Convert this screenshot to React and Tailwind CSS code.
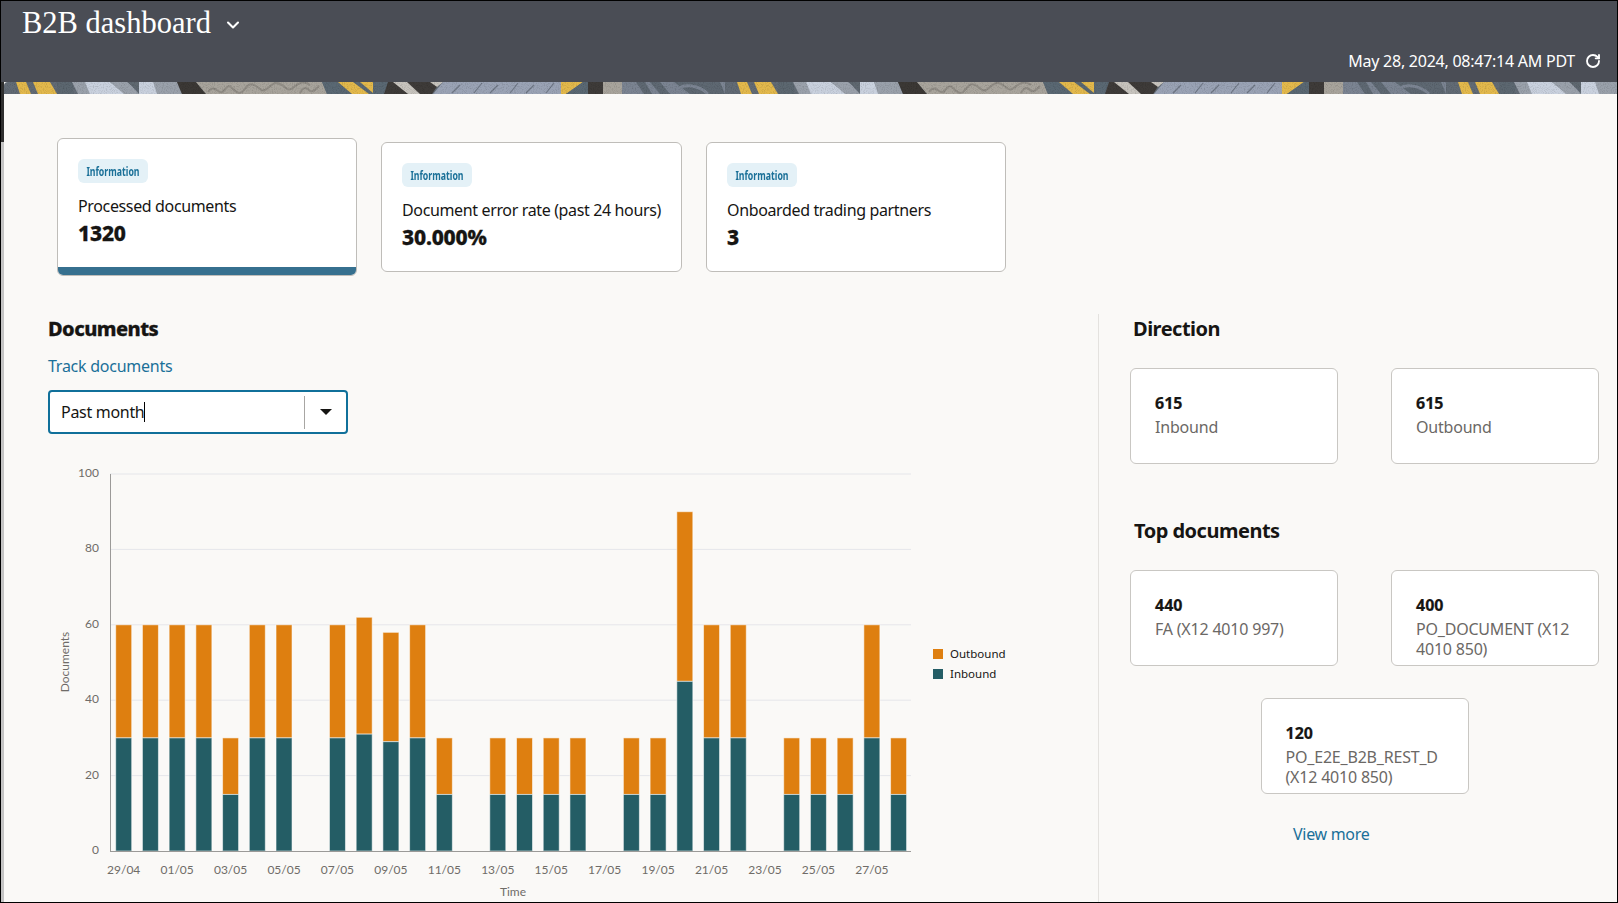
import React from "react";
import { ChevronDown, RotateCw } from "lucide-react";

const SANS = "font-['Noto_Sans',sans-serif]";

const days = [
  [30, 30], [30, 30], [30, 30], [30, 30], [15, 15], [30, 30], [30, 30], [0, 0],
  [30, 30], [31, 31], [29, 29], [30, 30], [15, 15], [0, 0], [15, 15], [15, 15],
  [15, 15], [15, 15], [0, 0], [15, 15], [15, 15], [45, 45], [30, 30], [30, 30],
  [0, 0], [15, 15], [15, 15], [15, 15], [30, 30], [15, 15],
];
const ticks = ["29/04", "01/05", "03/05", "05/05", "07/05", "09/05", "11/05", "13/05", "15/05", "17/05", "19/05", "21/05", "23/05", "25/05", "27/05"];
const yAt = (v) => 851 - v * 3.77;
const xAt = (i) => 123.7 + i * 26.72;

function BannerTile({ dx }) {
  return (
    <g transform={`translate(${dx} 0)`}>
      <rect x="4" y="0" width="721" height="12" fill="#626b75" />
      <polygon points="16,0 26,0 31,12 20,12" fill="#e3b94c" />
      <polygon points="33,0 50,0 57,12 38,12" fill="#e3b94c" />
      <rect x="57" y="0" width="16" height="12" fill="#5c6770" />
      <polygon points="72,0 88,0 92,12 78,12" fill="#9aa1ab" />
      <polygon points="85,0 110,0 126,12 90,12" fill="#c9d1de" />
      <polygon points="110,0 128,0 139,12 124,12" fill="#9aa1ab" />
      <polygon points="127,0 139,0 139,9" fill="#5f6870" />
      <polygon points="139,0 154,0 158,12 139,12" fill="#c9d1de" />
      <polygon points="153,0 177,0 182,12 157,12" fill="#9aa1ab" />
      <polygon points="177,0 196,0 206,12 182,12" fill="#3b3835" />
      <polygon points="196,0 322,0 327,12 206,12" fill="#a8a49c" />
      <path d="M208 10c6-9 10 2 14 0s5-9 10-4 8 7 12 2 6-8 12-4 6 7 12 2 8-7 14-3 6 7 12 2 10-6 16-2" fill="none" stroke="#908c85" strokeWidth="2" />
      <path d="M300 11c3-6 6-6 9-3s6 0 10-4" fill="none" stroke="#908c85" strokeWidth="2" />
      <polygon points="322,0 388,0 384,12 327,12" fill="#5a6873" />
      <polygon points="338,0 353,0 369,12 352,12" fill="#e3b94c" />
      <polygon points="360,0 373,0 373,11" fill="#e3b94c" />
      <polygon points="388,0 440,0 432,12 384,12" fill="#3e3b39" />
      <polygon points="393,0 407,0 420,12 408,12" fill="#c7c4be" />
      <polygon points="430,0 443,0 437,5" fill="#c7c4be" />
      <polygon points="443,0 562,0 562,12 433,12" fill="#9aa3b5" />
      {[452, 474, 490, 510, 526, 546].map((x, k) => (
        <path key={x} d={`M${x} 11 l8 -${k % 2 ? 10 : 8}`} stroke="#6f7785" strokeWidth="1.2" fill="none" />
      ))}
      <polygon points="561,0 583,0 566,12 561,12" fill="#e3b94c" />
      <polygon points="583,0 590,0 590,12 566,12" fill="#5a6873" />
      <rect x="588" y="0" width="15" height="12" fill="#3e3b39" />
      <rect x="603" y="0" width="20" height="12" fill="#a8a49c" />
      <rect x="622" y="0" width="103" height="12" fill="#7b8492" />
      <polygon points="636,0 645,0 652,12 644,12" fill="#5e6872" />
      <polygon points="650,0 660,0 670,12 660,12" fill="#5e6872" />
      <polygon points="674,0 720,0 725,12 690,12" fill="#5e6872" />
      <path d="M673 12c4-6 10-9 18-8s13 4 17 8" fill="none" stroke="#7b8492" strokeWidth="3" />
    </g>
  );
}

function Banner() {
  return (
    <svg viewBox="4 0 1613 12" width="1613" height="12" className="block shrink-0 rounded-tl-[4px]">
      <defs>
        <filter id="grain" x="0" y="0" width="100%" height="100%">
          <feTurbulence type="fractalNoise" baseFrequency="0.9" numOctaves="2" seed="4" />
          <feColorMatrix values="0 0 0 0 0  0 0 0 0 0  0 0 0 0 0  0 0 0 1.6 -0.72" />
        </filter>
      </defs>
      <BannerTile dx={0} />
      <BannerTile dx={721} />
      <BannerTile dx={1442} />
      <rect x="4" y="0" width="1613" height="12" filter="url(#grain)" opacity="0.2" />
    </svg>
  );
}

function Chart() {
  return (
    <svg viewBox="48 460 960 442" width="960" height="442" className="block mt-[26px] font-['Lato',sans-serif]">
      {[100, 80, 60, 40, 20].map((v) => (
        <line key={v} x1="110" x2="911" y1={yAt(v)} y2={yAt(v)} stroke="#e5e6ea" strokeWidth="1" />
      ))}
      {[0, 20, 40, 60, 80, 100].map((v) => (
        <text key={v} x="99" y={yAt(v) + 3} textAnchor="end" fontSize="12" fill="#6f6c68">
          {v}
        </text>
      ))}
      {days.map(([inb, out], i) =>
        inb === 0 ? null : (
          <g key={i} stroke="#ffffff" strokeOpacity="0.55" strokeWidth="1">
            <rect x={xAt(i) - 8} y={yAt(inb + out)} width="16" height={out * 3.77} fill="#de7f10" />
            <rect x={xAt(i) - 8} y={yAt(inb)} width="16" height={inb * 3.77} fill="#245d65" />
          </g>
        )
      )}
      <line x1="110.5" x2="110.5" y1="474" y2="851" stroke="#9b9a98" strokeWidth="1" />
      <line x1="110" x2="911" y1="851.5" y2="851.5" stroke="#9b9a98" strokeWidth="1" />
      {ticks.map((t, k) => (
        <text key={t} x={xAt(k * 2)} y="874" textAnchor="middle" fontSize="12" fill="#6f6c68">
          {t}
        </text>
      ))}
      <text x="513" y="896" textAnchor="middle" fontSize="12" fill="#6f6c68">
        Time
      </text>
      <text transform="translate(69 662) rotate(-90)" textAnchor="middle" fontSize="12" fill="#6f6c68">
        Documents
      </text>
      <rect x="933" y="649" width="10" height="10" fill="#de7f10" />
      <text x="950" y="658" fontSize="11.5" fill="#161513" className={SANS}>
        Outbound
      </text>
      <rect x="933" y="669" width="10" height="10" fill="#245d65" />
      <text x="950" y="678" fontSize="11.5" fill="#161513" className={SANS}>
        Inbound
      </text>
    </svg>
  );
}

function InfoCard({ title, value, active, wide }) {
  return (
    <div className={`${wide ? "w-[301px]" : "w-[300px]"} border border-[#bfbdb9] rounded-[6px] bg-white overflow-hidden`}>
      <div className="h-[128px] pl-5 pt-5">
        <div className="w-[70px] h-6 pt-[2px] rounded-[6px] bg-[#e4f1f7] flex items-center justify-center">
          <span className="scale-x-[0.76] text-[11.5px] font-bold text-[#1a7098] whitespace-nowrap">Information</span>
        </div>
        <div className="mt-[12px] text-[16px] leading-[22px] tracking-[-0.36px] whitespace-nowrap text-[#161513]">{title}</div>
        <div className="mt-[2px] text-[21px] leading-[28px] font-extrabold tracking-[-0.2px] text-[#161513] [-webkit-text-stroke:0.3px_#161513]">{value}</div>
      </div>
      {active && <div className="h-2 bg-[#36708f]" />}
    </div>
  );
}

function StatCard({ value, label }) {
  return (
    <div className="w-[208px] h-[96px] border border-[#c9c7c3] rounded-[6px] bg-white pl-[24px] pr-2 pt-[22px] overflow-hidden">
      <div className="text-[16px] leading-6 font-bold text-[#161513] [-webkit-text-stroke:0.2px_#161513]">{value}</div>
      <div className="mt-[2px] text-[16px] leading-5 tracking-[-0.2px] text-[#6b6865]">{label}</div>
    </div>
  );
}

export default function App() {
  return (
    <div className={`w-[1618px] h-[903px] flex flex-col border border-black overflow-hidden bg-[#faf9f7] ${SANS}`}>
      <header className="h-[81px] shrink-0 bg-[#4a4d55] text-white flex flex-col">
        <div className="flex items-center h-[44px] pl-[21px]">
          <span className="font-['Liberation_Serif',serif] text-[30.5px] leading-none">B2B dashboard</span>
          <ChevronDown size={20} strokeWidth={2.5} className="ml-[12px] mt-[3px]" />
        </div>
        <div className="flex items-center justify-end pr-[16px] mt-[6px] h-5">
          <span className="text-[16px] leading-5 tracking-[-0.25px]">May 28, 2024, 08:47:14 AM PDT</span>
          <RotateCw size={16} strokeWidth={2.8} className="ml-[10px] -mt-[1px]" />
        </div>
      </header>
      <div className="flex flex-1 min-h-0">
        <div className="w-[3px] shrink-0 flex flex-col">
          <div className="h-[60px] bg-[#2f2f2f]" />
          <div className="flex-1 bg-[#c4c4c4]" />
        </div>
        <main className="flex-1 min-w-0 flex flex-col">
          <Banner />
          <section className="flex items-center gap-6 pl-[53px] pt-[44px] pb-[38px]">
            <InfoCard title="Processed documents" value="1320" active />
            <InfoCard title="Document error rate (past 24 hours)" value="30.000%" wide />
            <InfoCard title="Onboarded trading partners" value="3" />
          </section>
          <div className="flex flex-1 min-h-0">
            <section className="w-[1095px] shrink-0 pl-[44px] border-r border-[#e4e2df]">
              <h2 className="text-[20px] leading-[28px] font-extrabold tracking-[-0.55px] text-[#161513] pt-[1px] [-webkit-text-stroke:0.3px_#161513]">Documents</h2>
              <a className="block mt-[13px] text-[16px] leading-5 tracking-[-0.25px] text-[#1a7099]">Track documents</a>
              <div className="mt-[14px] w-[300px] h-[44px] border-2 border-[#10709a] rounded-[4px] bg-white flex items-center">
                <div className="flex-1 flex items-center pl-[11px] text-[16px] tracking-[-0.3px] text-[#161513]">
                  <span>Past month</span>
                  <span className="w-px h-[20px] bg-black" />
                </div>
                <div className="w-px h-[33px] bg-[#a8a6a3]" />
                <div className="w-[41px] flex justify-center">
                  <svg width="12" height="6" viewBox="0 0 12 6">
                    <polygon points="0,0 12,0 6,6" fill="#161513" />
                  </svg>
                </div>
              </div>
              <Chart />
            </section>
            <aside className="pl-[31px] pt-[1px]">
              <h2 className="ml-[3px] text-[20px] leading-[28px] font-bold tracking-[-0.5px] text-[#161513]">Direction</h2>
              <div className="mt-[25px] w-[469px] flex flex-wrap justify-center gap-x-[53px]">
                <StatCard value="615" label="Inbound" />
                <StatCard value="615" label="Outbound" />
              </div>
              <h2 className="ml-1 mt-[53px] text-[20px] leading-[28px] font-bold tracking-[-0.5px] text-[#161513]">Top documents</h2>
              <div className="mt-[25px] w-[469px] flex flex-wrap justify-center gap-x-[53px] gap-y-[32px]">
                <StatCard value="440" label="FA (X12 4010 997)" />
                <StatCard value="400" label="PO_DOCUMENT (X12 4010 850)" />
                <StatCard value="120" label="PO_E2E_B2B_REST_D (X12 4010 850)" />
              </div>
              <a className="block mt-[30px] ml-[163px] text-[16px] leading-5 tracking-[-0.3px] text-[#1a7099]">View more</a>
            </aside>
          </div>
        </main>
      </div>
    </div>
  );
}
